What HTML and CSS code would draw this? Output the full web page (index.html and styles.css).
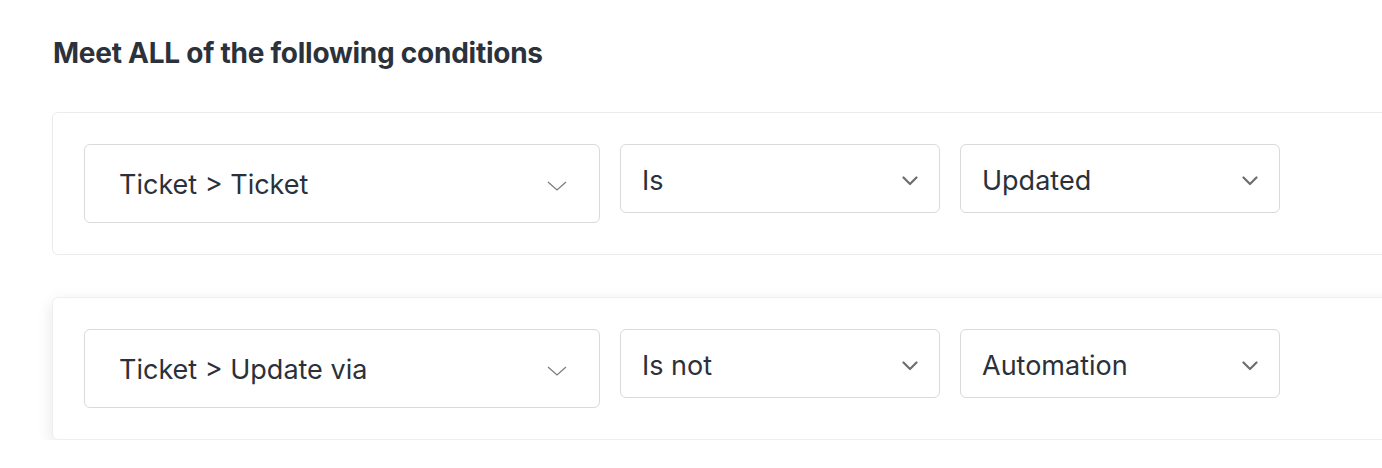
FILE: index.html
```html
<!DOCTYPE html>
<html>
<head>
<meta charset="utf-8">
<link rel="stylesheet" href="styles.css">
</head>
<body>
<div class="page">
  <h2 class="title">Meet ALL of the following conditions</h2>
  <div class="conditions">
    <div class="card">
      <div class="select select-wide">
        <span class="label">Ticket &gt; Ticket</span>
        <svg class="chev-thin" width="20" height="10" viewBox="0 0 20 10"><path d="M1 1 L10 9 L19 1" fill="none" stroke="#7a7d82" stroke-width="1.3"/></svg>
      </div>
      <div class="select">
        <span class="label">Is</span>
        <svg class="chev" width="16" height="10" viewBox="0 0 16 10"><path d="M1.5 1.5 L8 8 L14.5 1.5" fill="none" stroke="#6e6e6e" stroke-width="2.2" stroke-linecap="round" stroke-linejoin="round"/></svg>
      </div>
      <div class="select">
        <span class="label">Updated</span>
        <svg class="chev" width="16" height="10" viewBox="0 0 16 10"><path d="M1.5 1.5 L8 8 L14.5 1.5" fill="none" stroke="#6e6e6e" stroke-width="2.2" stroke-linecap="round" stroke-linejoin="round"/></svg>
      </div>
    </div>
    <div class="card card-raised">
      <div class="select select-wide">
        <span class="label">Ticket &gt; Update via</span>
        <svg class="chev-thin" width="20" height="10" viewBox="0 0 20 10"><path d="M1 1 L10 9 L19 1" fill="none" stroke="#7a7d82" stroke-width="1.3"/></svg>
      </div>
      <div class="select">
        <span class="label">Is not</span>
        <svg class="chev" width="16" height="10" viewBox="0 0 16 10"><path d="M1.5 1.5 L8 8 L14.5 1.5" fill="none" stroke="#6e6e6e" stroke-width="2.2" stroke-linecap="round" stroke-linejoin="round"/></svg>
      </div>
      <div class="select">
        <span class="label">Automation</span>
        <svg class="chev" width="16" height="10" viewBox="0 0 16 10"><path d="M1.5 1.5 L8 8 L14.5 1.5" fill="none" stroke="#6e6e6e" stroke-width="2.2" stroke-linecap="round" stroke-linejoin="round"/></svg>
      </div>
    </div>
  </div>
</div>
</body>
</html>
```
FILE: styles.css
```css
* { box-sizing: border-box; }
html, body {
  margin: 0;
  padding: 0;
  background: #ffffff;
  overflow: hidden;
}
body {
  font-family: Inter, "Noto Sans", "Liberation Sans", sans-serif;
  color: #2b313a;
}
.page {
  padding: 35px 0 0 52px;
  width: 1460px;
}
.title {
  margin: 0 0 0 1px;
  font-size: 28px;
  line-height: 36px;
  font-weight: 700;
  color: #2c323b;
  letter-spacing: -0.25px;
}
.conditions {
  margin-top: 41px;
  display: flex;
  flex-direction: column;
  gap: 42px;
}
.card {
  display: flex;
  align-items: flex-start;
  gap: 20px;
  padding: 31px;
  border: 1px solid #ebebeb;
  border-radius: 6px;
  background: #fff;
}
.card-raised {
  border-color: #efefef;
  box-shadow: 0 5px 16px rgba(0, 0, 0, 0.1);
}
.select {
  display: flex;
  align-items: center;
  justify-content: space-between;
  width: 320px;
  height: 69px;
  padding: 4px 21px 0 21px;
  border: 1.5px solid #dadada;
  border-radius: 6px;
  background: #fff;
}
.select-wide {
  width: 516px;
  height: 79px;
  padding: 2px 32px 0 34px;
}
.label {
  font-size: 27px;
  line-height: 30px;
  font-weight: 400;
  color: #2b313a;
}
.chev, .chev-thin { display: block; flex: none; }
.chev-thin { margin-top: 2px; }
```
